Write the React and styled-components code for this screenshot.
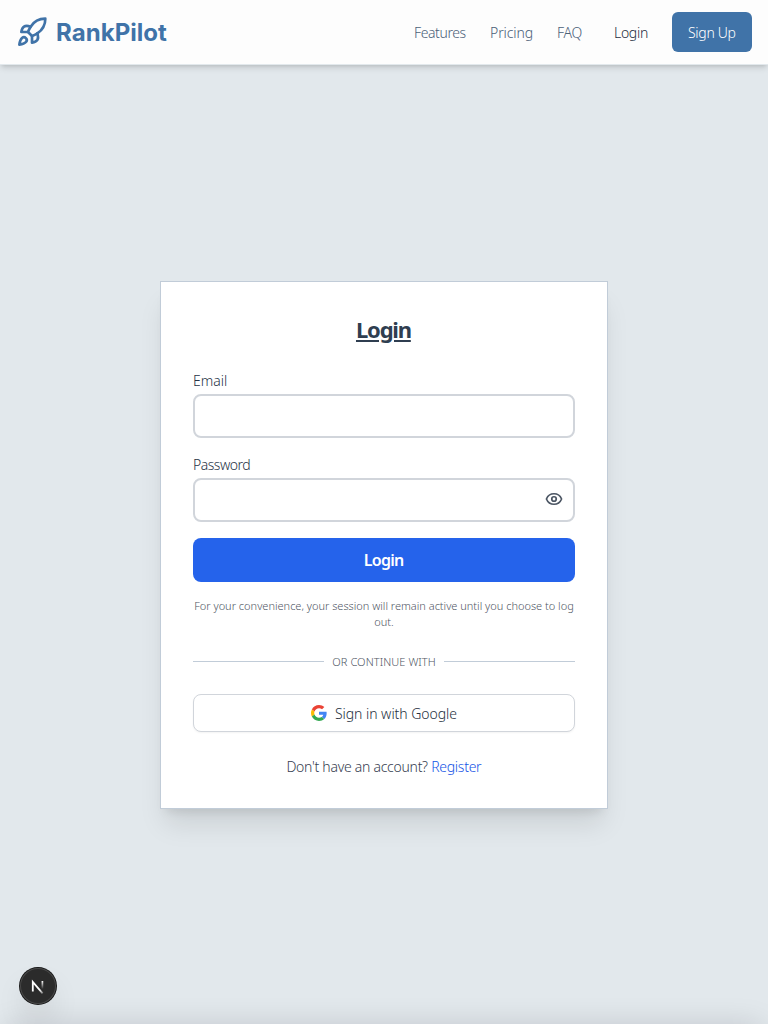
import React from 'react';
import styled, { createGlobalStyle } from 'styled-components';
import { Rocket, Eye } from 'lucide-react';

const GlobalStyle = createGlobalStyle`
  *, *::before, *::after { box-sizing: border-box; }
  body { margin: 0; background: #e2e8ec; font-family: "Noto Sans", sans-serif; font-weight: 300; color: #334155; }
  h1, p { margin: 0; }
  button, input { font: inherit; }
  a { color: inherit; text-decoration: none; }
`;

const Page = styled.div`
  height: 1024px;
  display: flex;
  flex-direction: column;
  overflow: hidden;
`;

const Header = styled.header`
  flex: none;
  height: 65px;
  padding: 0 16px;
  display: flex;
  align-items: center;
  justify-content: space-between;
  background: #fdfdfd;
  border-bottom: 1px solid #e2e8ec;
  box-shadow: 0 4px 6px -1px rgb(0 0 0 / 0.12), 0 2px 4px -2px rgb(0 0 0 / 0.12);
`;

const Brand = styled.a`
  display: flex;
  align-items: center;
  gap: 8px;
  color: #4073a8;
`;

const Text = styled.span`
  white-space: nowrap;
  letter-spacing: ${(p) => p.$track || 0}px;
  margin-right: ${(p) => -(p.$track || 0)}px;
`;

const BrandName = styled(Text)`
  padding-top: 1px;
  font: 700 24px/32px "Inter", sans-serif;
`;

const Nav = styled.nav`
  display: flex;
  align-items: center;
  font-size: 14px;
  line-height: 20px;
`;

const NavLink = styled.a`
  width: ${(p) => p.$width}px;
  margin-right: ${(p) => p.$gap}px;
  padding-top: 1px;
  white-space: nowrap;
  color: ${(p) => (p.$strong ? '#1e2e40' : '#4a6078')};
`;

const SignUp = styled.button`
  width: 80px;
  height: 40px;
  padding: 1px 0 0;
  border: 0;
  border-radius: 6px;
  background: #4073a8;
  color: #fff;
`;

const Main = styled.main`
  flex: 1;
  display: flex;
  align-items: center;
  justify-content: center;
`;

const Card = styled.form`
  width: 448px;
  height: 528px;
  padding: 32px;
  display: flex;
  flex-direction: column;
  background: #fff;
  border: 1px solid #c1ccd8;
  box-shadow: 0 20px 25px -5px rgb(0 0 0 / 0.1), 0 8px 10px -6px rgb(0 0 0 / 0.1);
`;

const Title = styled.h1`
  margin: -1px 0 25px;
  text-align: center;
  font-size: 22px;
  line-height: 32px;
  font-weight: 700;
  color: #2f3e50;
  text-decoration: underline;
  text-decoration-thickness: 2px;
  text-underline-offset: 2px;
`;

const Field = styled.label`
  display: flex;
  flex-direction: column;
  gap: 3px;
  margin-bottom: 16px;
  padding-top: 1px;
  font-size: 14px;
  line-height: 20px;
  color: #263245;
`;

const InputBox = styled.span`
  height: 44px;
  padding: 0 10px;
  display: flex;
  align-items: center;
  border: 2px solid #d1d5db;
  border-radius: 8px;
  color: #4b5563;
  svg { margin-bottom: 2px; }
`;

const Input = styled.input`
  flex: 1;
  min-width: 0;
  border: 0;
  outline: 0;
  background: transparent;
`;

const Submit = styled.button`
  height: 44px;
  flex: none;
  border: 0;
  border-radius: 8px;
  background: #2563eb;
  color: #fff;
  font-size: 16px;
  font-weight: 600;
`;

const Note = styled.p`
  margin: 16px -6px 0;
  text-align: center;
  font-size: 11px;
  line-height: 16px;
  color: #4f5664;
`;

const Divider = styled.div`
  margin: 24px 0;
  display: flex;
  align-items: center;
  gap: 8px;
  font-size: 11px;
  line-height: 16px;
  color: #4f5664;
  &::before, &::after { content: ""; flex: 1; height: 1px; background: #c1ccd8; }
`;

const GoogleButton = styled.button`
  flex: none;
  height: 38px;
  display: flex;
  align-items: center;
  justify-content: center;
  gap: 8px;
  border: 1px solid #d1d5db;
  border-radius: 8px;
  background: #fff;
  box-shadow: 0 1px 2px rgb(0 0 0 / 0.05);
  font-size: 14px;
  color: #263040;
  span { padding-top: 1px; }
`;

const Register = styled.p`
  margin-top: 25px;
  text-align: center;
  font-size: 14px;
  line-height: 20px;
  color: #364050;
  a { color: #1453e6; }
`;

const Footer = styled.footer`
  flex: none;
  height: 80px;
  margin-bottom: -80px;
  background: #fdfdfd;
  box-shadow: 0 -5px 30px -8px rgb(20 10 30 / 0.17);
`;

const DevBadge = styled.div`
  position: fixed;
  left: 20px;
  bottom: 20px;
  width: 36px;
  height: 36px;
  border-radius: 50%;
  background: #2b2b2b;
  box-shadow: 0 0 0 1px #171717, inset 0 0 0 1px #484848, 0 16px 32px -8px rgb(0 0 0 / 0.24);
  svg { display: block; }
`;

const GoogleLogo = () => (
  <svg width="16" height="16" viewBox="0 0 48 48">
    <path fill="#EA4335" d="M24 9.5c3.54 0 6.71 1.22 9.21 3.6l6.85-6.85C35.9 2.38 30.47 0 24 0 14.62 0 6.51 5.38 2.56 13.22l7.98 6.19C12.43 13.72 17.74 9.5 24 9.5z" />
    <path fill="#4285F4" d="M46.98 24.55c0-1.57-.15-3.09-.38-4.55H24v9.02h12.94c-.58 2.96-2.26 5.48-4.78 7.18l7.73 6c4.51-4.18 7.09-10.36 7.09-17.65z" />
    <path fill="#FBBC05" d="M10.53 28.59c-.48-1.45-.76-2.99-.76-4.59s.27-3.14.76-4.59l-7.98-6.19C.92 16.46 0 20.12 0 24c0 3.88.92 7.54 2.56 10.78l7.97-6.19z" />
    <path fill="#34A853" d="M24 48c6.48 0 11.93-2.13 15.89-5.81l-7.73-6c-2.15 1.45-4.92 2.3-8.16 2.3-6.26 0-11.57-4.22-13.47-9.91l-7.98 6.19C6.51 42.62 14.62 48 24 48z" />
  </svg>
);

const NextLogo = () => (
  <svg width="36" height="36" viewBox="0 0 36 36" fill="none">
    <defs>
      <linearGradient id="diag" x1="18" y1="18" x2="24" y2="26" gradientUnits="userSpaceOnUse">
        <stop offset="0.4" stopColor="#fff" />
        <stop offset="1" stopColor="#fff" stopOpacity="0.2" />
      </linearGradient>
      <linearGradient id="stem" x1="23" y1="13" x2="23" y2="21" gradientUnits="userSpaceOnUse">
        <stop stopColor="#fff" />
        <stop offset="1" stopColor="#fff" stopOpacity="0" />
      </linearGradient>
    </defs>
    <path d="M12.8 23.6V14L22.6 25.4" stroke="url(#diag)" strokeWidth="1.8" />
    <path d="M22.4 13v8" stroke="url(#stem)" strokeWidth="1.7" />
  </svg>
);

export default function App() {
  return (
    <Page>
      <GlobalStyle />
      <Header>
        <Brand href="#">
          <Rocket size={32} />
          <BrandName $track={0.05}>RankPilot</BrandName>
        </Brand>
        <Nav>
          <NavLink href="#" $width={52} $gap={24}><Text $track={-0.4}>Features</Text></NavLink>
          <NavLink href="#" $width={43} $gap={24}><Text $track={-0.1}>Pricing</Text></NavLink>
          <NavLink href="#" $width={25} $gap={32}><Text $track={-0.3}>FAQ</Text></NavLink>
          <NavLink href="#" $width={34} $gap={24} $strong><Text $track={-0.3}>Login</Text></NavLink>
          <SignUp><Text $track={-0.3}>Sign Up</Text></SignUp>
        </Nav>
      </Header>
      <Main>
        <Card>
          <Title><Text $track={-1.2}>Login</Text></Title>
          <Field>
            <Text>Email</Text>
            <InputBox><Input type="email" /></InputBox>
          </Field>
          <Field>
            <Text $track={-0.5}>Password</Text>
            <InputBox><Input type="password" /><Eye size={18} strokeWidth={2.3} /></InputBox>
          </Field>
          <Submit type="button"><Text $track={-0.7}>Login</Text></Submit>
          <Note>
            <Text>For your convenience, your session will remain active until you choose to log</Text>
            <br />
            <Text>out.</Text>
          </Note>
          <Divider><Text $track={0.08}>OR CONTINUE WITH</Text></Divider>
          <GoogleButton type="button"><GoogleLogo /><Text $track={-0.04}>Sign in with Google</Text></GoogleButton>
          <Register><Text $track={-0.27}>Don't have an account? <a href="#">Register</a></Text></Register>
        </Card>
      </Main>
      <Footer />
      <DevBadge><NextLogo /></DevBadge>
    </Page>
  );
}
